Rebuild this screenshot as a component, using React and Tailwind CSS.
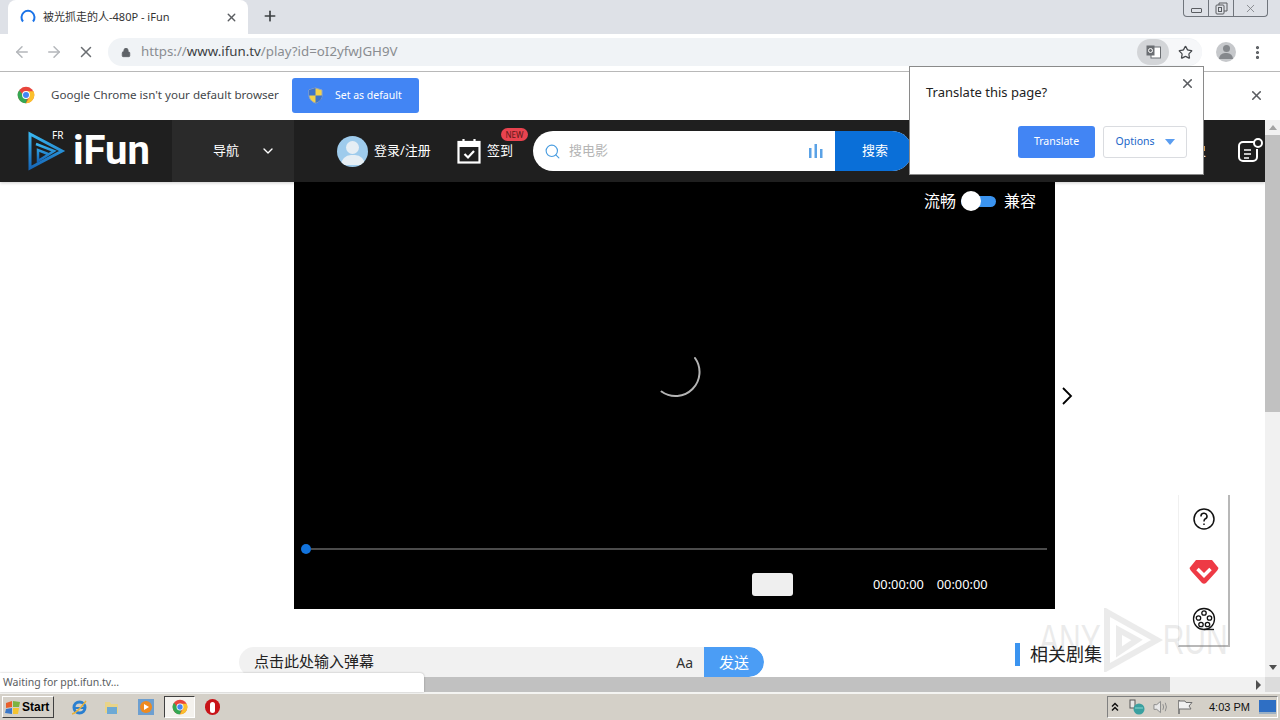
import { ArrowLeft, ArrowRight, X, Lock, Star, Plus, ChevronDown, Search, MoreVertical } from 'lucide-react';

function ChromeLogo({ size = 18 }) {
  return (
    <svg width={size} height={size} viewBox="0 0 24 24">
      <circle cx="12" cy="12" r="11" fill="#e8453c" />
      <path d="M12 12 L2.5 17.5 A11 11 0 0 1 3 5.5 L8 12z" fill="#34a853" />
      <path d="M12 23 A11 11 0 0 1 2.5 17.5 L8 11 L14 16z" fill="#34a853" />
      <path d="M12 7 H22 A11 11 0 0 1 12 23 L17 14z" fill="#fbc02d" />
      <circle cx="12" cy="12" r="5.2" fill="#fff" />
      <circle cx="12" cy="12" r="4" fill="#4285f4" />
    </svg>
  );
}

function ShieldIcon() {
  return (
    <svg width="15" height="17" viewBox="0 0 15 17">
      <path d="M7.5 1 L14 3 V8 C14 12 11 15 7.5 16 C4 15 1 12 1 8 V3z" fill="#f4d24a" stroke="#9aa8b8" />
      <path d="M7.5 1 V8.5 H1 V3z" fill="#3f74c9" />
      <path d="M7.5 8.5 H14 C14 12 11 15 7.5 16z" fill="#3f74c9" />
    </svg>
  );
}

function IfunLogo() {
  return (
    <svg width="38" height="42" viewBox="0 0 38 42" fill="none">
      <defs>
        <linearGradient id="lg" x1="0" y1="0" x2="0" y2="1">
          <stop offset="0" stopColor="#38b6f0" />
          <stop offset="1" stopColor="#1667b8" />
        </linearGradient>
      </defs>
      <path d="M2 4 L34 21 L2 38z" stroke="url(#lg)" strokeWidth="3" />
      <path d="M8 14 L26 21 L10 31 L10 20 L20 24" stroke="url(#lg)" strokeWidth="2.5" />
    </svg>
  );
}

function CalendarIcon() {
  return (
    <svg width="24" height="26" viewBox="0 0 24 26" fill="none">
      <rect x="1.5" y="4" width="21" height="20.5" fill="#1f1f1f" stroke="#fff" strokeWidth="2.2" />
      <rect x="1.5" y="4" width="21" height="5" fill="#fff" />
      <path d="M6.5 1 V6 M17.5 1 V6" stroke="#fff" strokeWidth="2.2" />
      <path d="M7.5 16 L11 19.5 L17 13" stroke="#fff" strokeWidth="2.2" />
    </svg>
  );
}

function Toolbar() {
  return (
    <div className="h-[38px] bg-white flex items-center border-b border-[#b8b8b8] pb-[1px] relative shrink-0">
      <ArrowLeft className="w-[18px] h-[18px] text-[#b4b7bb] ml-[13px]" strokeWidth={2} />
      <ArrowRight className="w-[18px] h-[18px] text-[#b4b7bb] ml-[14px]" strokeWidth={2} />
      <X className="w-[18px] h-[18px] text-[#6b6e72] ml-[14px]" strokeWidth={2} />
      <div className="ml-[13px] w-[1094px] h-[28px] rounded-full bg-[#f0f3f6] flex items-center">
        <Lock className="w-[10px] h-[11px] ml-[13px] text-[#5f6368] fill-[#5f6368]" strokeWidth={2} />
        <span className="ml-[10px] text-[13.3px] text-[#8a8d91]">
          https://<span className="text-[#3c3f43]">www.ifun.tv</span>/play?id=oI2yfwJGH9V
        </span>
        <div className="ml-auto w-[65px] h-[26px] flex items-center rounded-full bg-[#f6f7f9]">
          <div className="w-[32px] h-[26px] rounded-full bg-[#d3d5d8] flex items-center justify-center">
            <svg width="15" height="15" viewBox="0 0 15 15">
              <rect x="5" y="2" width="9.5" height="11" fill="#fff" stroke="#6b6e72" />
              <rect x="0.5" y="0.5" width="8" height="10" fill="#6b6e72" />
              <circle cx="4.5" cy="5.5" r="2" fill="none" stroke="#fff" />
            </svg>
          </div>
          <Star className="w-[15px] h-[15px] ml-[9px] text-[#45484c]" strokeWidth={2} />
        </div>
      </div>
      <div className="ml-[14px] w-[20px] h-[20px] rounded-full bg-[#c6c8cb] flex flex-col items-center justify-center overflow-hidden">
        <div className="w-[7px] h-[7px] rounded-full bg-[#85888c]" />
        <div className="w-[14px] h-[6px] rounded-t-full bg-[#85888c] mt-[1px]" />
      </div>
      <MoreVertical className="w-[17px] h-[17px] ml-[13px] text-[#55585c]" strokeWidth={2.5} />
    </div>
  );
}

function Header() {
  return (
    <div className="h-[62px] bg-[#1f1f1f] flex items-center shadow-[0_1px_3px_rgba(0,0,0,0.2)] shrink-0">
      <div className="w-[172px] h-full flex items-center relative">
        <div className="ml-[28px]"><IfunLogo /></div>
        <span className="absolute left-[52px] top-[9px] text-[10px] leading-[12px] text-white">FR</span>
        <span className="ml-[7px] text-[40px] leading-none font-bold text-white font-['Roboto',sans-serif]">iFun</span>
      </div>
      <div className="w-[122px] h-full bg-[#2a2a2a] flex items-center text-white text-[13px]">
        <span className="ml-[41px]">导航</span>
        <ChevronDown className="w-[16px] h-[16px] ml-[21px]" strokeWidth={2} />
      </div>
      <div className="ml-[43px] w-[31px] h-[31px] rounded-full bg-[#9ecbec] flex flex-col items-center justify-center overflow-hidden">
        <div className="w-[13px] h-[13px] rounded-full bg-[#e6eef4] mt-[3px]" />
        <div className="w-[24px] h-[10px] rounded-t-full bg-[#e6eef4] mt-[1px]" />
      </div>
      <span className="ml-[6px] text-white text-[13px] w-[60px] whitespace-nowrap">登录/注册</span>
      <div className="ml-[23px]"><CalendarIcon /></div>
      <div className="relative ml-[6px] mt-[-4px] w-[45px]">
        <span className="text-white text-[13px]">签到</span>
        <span className="absolute left-[14px] top-[-9px] w-[27px] h-[13px] rounded-full bg-[#e8434f] text-[#5b1a18] text-[8px] leading-[13px] text-center">NEW</span>
      </div>
      <div className="ml-[1px] w-[379px] h-[40px] rounded-full bg-white overflow-hidden flex items-center">
        <Search className="w-[17px] h-[17px] ml-[11px] text-[#4a9de0]" strokeWidth={1.6} />
        <span className="ml-[8px] text-[13px] text-[#b5b5b5]">搜电影</span>
        <svg className="ml-auto mr-[11px]" width="16" height="14" viewBox="0 0 16 14" fill="#5aa2e6">
          <rect x="1" y="4" width="2.5" height="10" />
          <rect x="6.5" y="0" width="2.5" height="14" />
          <rect x="12" y="5" width="2.5" height="9" />
        </svg>
        <div className="w-[77px] h-full pl-[3px] bg-[#0a6fd8] text-white text-[13px] flex items-center justify-center">搜索</div>
      </div>
      <span className="ml-auto text-white text-[13px]">历史</span>
      <svg className="ml-[30px] mr-[1px]" width="28" height="28" viewBox="0 0 28 28" fill="none" stroke="#fff" strokeWidth="2">
        <path d="M19 5 H7 A4 4 0 0 0 3 9 V20 A4 4 0 0 0 7 24 H17 A4 4 0 0 0 21 20 V12" />
        <path d="M8 13 H15 M8 17 H15 M8 21 H13" strokeWidth="1.6" />
        <circle cx="22" cy="6" r="4" />
      </svg>
    </div>
  );
}

function Player() {
  return (
    <div className="w-[761px] h-[427px] bg-black flex flex-col relative">
      <div className="flex items-center justify-end h-[40px] pb-[2px] text-white text-[16px] pr-[19px]">
        <span>流畅</span>
        <div className="relative w-[35px] h-[11px] ml-[5px] mr-[8px] rounded-full bg-[#3b94f0]">
          <div className="absolute left-0 top-[-5px] w-[20px] h-[20px] rounded-full bg-white" />
        </div>
        <span>兼容</span>
      </div>
      <div className="flex-1 flex items-center justify-center pb-[20px]">
        <svg width="52" height="52" viewBox="0 0 52 52" fill="none">
          <path d="M46 12 A24 24 0 0 1 12.5 45.5" stroke="#b4b4b4" strokeWidth="2" strokeLinecap="round" />
        </svg>
      </div>
      <div className="flex items-center h-[16px] pl-[7px] pr-[8px]">
        <div className="w-[10px] h-[10px] rounded-full bg-[#1273dd] shrink-0" />
        <div className="flex-1 h-[2px] bg-[#4b4b4b]" />
      </div>
      <div className="h-[52px] flex items-start pt-[16px]">
        <div className="ml-[458px] w-[41px] h-[23px] rounded-[3px] bg-[#efefef]" />
        <span className="ml-[80px] text-white text-[12.8px] leading-[23px]">00:00:00</span>
        <span className="ml-[13px] text-white text-[12.8px] leading-[23px]">00:00:00</span>
      </div>
    </div>
  );
}

function Page() {
  return (
    <div className="flex-1 min-w-0 bg-white flex flex-col overflow-hidden relative">
      <Header />
      <div className="flex">
        <div className="ml-[294px]"><Player /></div>
        <svg className="self-center ml-[6px]" width="12" height="20" viewBox="0 0 12 20" fill="none" stroke="#000" strokeWidth="1.8">
          <path d="M2 2 L10 10 L2 18" />
        </svg>
      </div>
      <div className="flex mt-[38px] items-start">
        <div className="ml-[239px] w-[525px] h-[30px] rounded-full bg-[#f1f1f1] flex items-center overflow-hidden">
          <span className="ml-[15px] mt-[-2px] text-[15px] text-[#222]">点击此处输入弹幕</span>
          <span className="ml-auto mr-[11px] text-[14px] text-[#333]">Aa</span>
          <div className="w-[60px] h-full bg-[#4b9df5] text-white text-[15px] flex items-center justify-center rounded-r-full">发送</div>
        </div>
        <div className="ml-[251px] mt-[-5px] flex items-center">
          <div className="w-[5px] h-[23px] bg-[#3b94f0]" />
          <span className="ml-[10px] text-[18px] leading-[24px] text-[#222]">相关剧集</span>
        </div>
      </div>

      {/* floating side tools */}
      <div className="absolute left-[1178px] top-[375px] w-[52px] h-[152px] bg-white border-l border-[#f0f0f0] border-r-2 border-r-[#b8b8b8] border-b-2 border-b-[#b8b8b8] flex flex-col items-center">
        <svg className="mt-[13px]" width="22" height="22" viewBox="0 0 22 22" fill="none" stroke="#111" strokeWidth="1.5">
          <circle cx="11" cy="11" r="10" />
          <path d="M8 8.5 A3 3 0 1 1 12 11 Q11 11.6 11 13.5" />
          <path d="M11 15.5 V17" />
        </svg>
        <svg className="mt-[29px]" width="30" height="26" viewBox="0 0 30 26">
          <path d="M7 1 H23 L29.5 9 Q29 11 27 13 L17 24 Q15 25.5 13 24 L3 13 Q1 11 0.5 9z" fill="#ee3a45" />
          <path d="M8.5 10 L15 16.5 L21.5 10" fill="none" stroke="#fff" strokeWidth="3.5" />
        </svg>
        <svg className="mt-[22px]" width="24" height="24" viewBox="0 0 24 24" fill="none" stroke="#111" strokeWidth="1.3">
          <circle cx="12" cy="12" r="10.5" />
          <circle cx="12" cy="6" r="2.2" />
          <circle cx="6.5" cy="11" r="2.2" />
          <circle cx="17.5" cy="11" r="2.2" />
          <circle cx="9" cy="17.5" r="2.2" />
          <circle cx="15.5" cy="17.5" r="2.2" />
          <path d="M12 22.5 H22" />
        </svg>
      </div>

      {/* watermark */}
      <div className="absolute left-[1039px] top-[488px] flex items-center opacity-[0.14] pointer-events-none text-[#777] text-[30px] leading-none font-['Liberation_Sans',sans-serif]">
        <span className="scale-y-[1.4]">ANY</span>
        <svg width="62" height="64" viewBox="0 0 62 64" fill="none" stroke="#777" strokeWidth="6">
          <path d="M6 4 L56 32 L6 60z" />
          <path d="M18 22 L36 32 L18 44z" />
        </svg>
        <span className="scale-y-[1.4]">RUN</span>
      </div>
    </div>
  );
}

function VScrollbar() {
  return (
    <div className="w-[15px] bg-[#f1f1f1] flex flex-col items-center shrink-0">
      <div className="h-[15px] w-full flex items-center justify-center">
        <div className="w-0 h-0 border-x-[4px] border-x-transparent border-b-[5px] border-b-[#a3a3a3]" />
      </div>
      <div className="w-full h-[277px] bg-[#c1c1c1]" />
      <div className="mt-auto h-[20px] w-full flex items-center justify-center">
        <div className="w-0 h-0 border-x-[4px] border-x-transparent border-t-[5px] border-t-[#505050]" />
      </div>
    </div>
  );
}

function Taskbar() {
  return (
    <div className="h-[28px] bg-[#d4d0c8] border-t-2 border-[#f4f4f2] flex items-center shrink-0 font-['Liberation_Sans',sans-serif]">
      <div className="ml-[2px] w-[52px] h-[22px] bg-[#d4d0c8] border border-t-white border-l-white border-r-[#404040] border-b-[#404040] flex items-center">
        <svg className="ml-[2px]" width="16" height="15" viewBox="0 0 16 15">
          <path d="M1 3 L7 1 L7 7 L1 8z" fill="#e8602c" />
          <path d="M8 1 L15 2 L14 7 L8 7z" fill="#7cb342" />
          <path d="M1 9 L7 8 L7 14 L0 13z" fill="#3b78c9" />
          <path d="M8 8 L14 8 L13 14 L8 14z" fill="#f4c430" />
        </svg>
        <span className="ml-[1px] text-[12px] font-bold text-black">Start</span>
      </div>
      <svg className="ml-[17px]" width="17" height="17" viewBox="0 0 17 17" fill="none">
        <circle cx="8.5" cy="8.5" r="5.5" stroke="#2a7fd0" strokeWidth="3" />
        <path d="M3 9 H14" stroke="#2a7fd0" strokeWidth="2" />
        <path d="M1 15 Q6 14 15 2" stroke="#e8b23a" strokeWidth="1.5" />
      </svg>
      <svg className="ml-[16px]" width="16" height="16" viewBox="0 0 16 16">
        <path d="M1 3 H6 L7 5 H14 V14 H1z" fill="#e9d48a" />
        <path d="M3 8 H13 V15 H3z" fill="#6ea9d4" />
      </svg>
      <div className="ml-[18px] w-[16px] h-[16px] bg-[#6d9fd0] flex items-center justify-center">
        <div className="w-[12px] h-[12px] rounded-full bg-[#ee8a1f] flex items-center justify-center">
          <div className="w-0 h-0 border-y-[3px] border-y-transparent border-l-[5px] border-l-white ml-[1px]" />
        </div>
      </div>
      <div className="ml-[10px] w-[31px] h-[22px] bg-[#f4f2ee] border border-t-[#404040] border-l-[#404040] border-r-white border-b-white flex items-center justify-center">
        <ChromeLogo size={16} />
      </div>
      <div className="ml-[10px] w-[15px] h-[16px] rounded-full bg-[#c81318] flex items-center justify-center">
        <div className="w-[5px] h-[11px] rounded-full bg-white" />
      </div>
      <div className="ml-auto mr-[2px] w-[171px] h-[22px] border border-t-[#808080] border-l-[#808080] border-r-white border-b-white flex items-center">
        <svg className="ml-[3px]" width="8" height="10" viewBox="0 0 8 10" fill="none" stroke="#111" strokeWidth="1.5">
          <path d="M1 4.5 L4 1.5 L7 4.5 M1 8.5 L4 5.5 L7 8.5" />
        </svg>
        <svg className="ml-[10px]" width="16" height="16" viewBox="0 0 16 16">
          <rect x="1" y="1" width="5" height="8" fill="#e6e6e6" stroke="#555" />
          <circle cx="10" cy="10" r="5.5" fill="#3aa0a0" />
          <path d="M6 9 H14" stroke="#8ad8d0" />
        </svg>
        <svg className="ml-[8px]" width="16" height="16" viewBox="0 0 17 16" fill="none" stroke="#8a8a8a">
          <path d="M1 5.5 H4 L8 2 V14 L4 10.5 H1z" fill="#e8e8e8" />
          <path d="M10.5 5 Q12 8 10.5 11 M13 3.5 Q15.5 8 13 12.5" />
        </svg>
        <svg className="ml-[8px]" width="16" height="16" viewBox="0 0 16 16" fill="none" stroke="#6e6e6e">
          <path d="M2 1 V15" strokeWidth="1.5" />
          <path d="M2 2 H8 L9 3.5 H15 L12 7 L14 10 H2" fill="#f0f0f0" />
        </svg>
        <span className="ml-[16px] text-[11px] text-[#111]">4:03 PM</span>
        <div className="ml-auto mr-[1px] w-[17px] h-[14px] bg-[#2f6fc4] border-b-2 border-[#9bb0c4]" />
      </div>
    </div>
  );
}

export default function App() {
  return (
    <div className="w-[1280px] h-[720px] overflow-hidden flex flex-col relative bg-white font-['Noto_Sans','Noto_Sans_CJK_SC',sans-serif]">
      {/* tab strip */}
      <div className="h-[34px] bg-[#dee1e7] flex items-end relative shrink-0">
        <div className="ml-[8px] w-[240px] h-[34px] bg-white rounded-t-lg flex items-center">
          <svg className="ml-[12px]" width="16" height="16" viewBox="0 0 16 16" fill="none">
            <path d="M3 12.5 A6.5 6.5 0 1 1 13 12.5" stroke="#1a73e8" strokeWidth="2" />
          </svg>
          <span className="ml-[7px] text-[11px] text-[#333] whitespace-nowrap">被光抓走的人-480P - iFun</span>
          <X className="w-[13px] h-[13px] ml-auto mr-[10px] text-[#5a5d61]" strokeWidth={2.5} />
        </div>
        <Plus className="w-[16px] h-[16px] ml-[14px] mb-[10px] text-[#3c4043]" strokeWidth={2.5} />
        <div className="absolute right-[12px] top-0 w-[85px] h-[17px] border border-t-0 border-[#70757c] rounded-b-[4px] flex text-[#5a5d61]">
          <div className="w-[25px] flex items-center justify-center border-r border-[#70757c]">
            <div className="w-[11px] h-[5px] border border-[#5a5d61] rounded-[1px] mt-[4px]" />
          </div>
          <div className="w-[25px] flex items-center justify-center border-r border-[#70757c]">
            <svg width="13" height="13" viewBox="0 0 13 13" fill="none" stroke="#5a5d61">
              <rect x="1" y="3" width="8" height="9" rx="1" />
              <path d="M4 3 V1 H12 V9 H9" />
              <rect x="3.5" y="5.5" width="3" height="4" />
            </svg>
          </div>
          <div className="flex-1 flex items-center justify-center">
            <X className="w-[13px] h-[13px] text-[#7a7d81]" strokeWidth={1.5} />
          </div>
        </div>
      </div>

      <Toolbar />

      {/* default browser bar */}
      <div className="h-[48px] bg-white flex items-center pb-[2px] relative shrink-0">
        <div className="ml-[17px]"><ChromeLogo /></div>
        <span className="ml-[16px] text-[11.6px] text-[#44474b] whitespace-nowrap">Google Chrome isn't your default browser</span>
        <div className="absolute left-[292px] top-[6px] w-[127px] h-[35px] rounded-[3px] bg-[#4285f4] flex items-center text-white text-[10.5px]">
          <div className="ml-[16px]"><ShieldIcon /></div>
          <span className="ml-[12px]">Set as default</span>
        </div>
        <X className="absolute right-[16px] top-[16px] w-[15px] h-[15px] text-[#5a5d61]" strokeWidth={2.5} />
      </div>

      {/* browser content */}
      <div className="flex flex-1 min-h-0">
        <Page />
        <VScrollbar />
      </div>

      {/* horizontal scrollbar */}
      <div className="h-[15px] bg-[#f1f1f1] flex items-center shrink-0">
        <div className="ml-[424px] w-[746px] h-full bg-[#c1c1c1]" />
        <div className="ml-auto mr-[4px] w-0 h-0 border-y-[5px] border-y-transparent border-l-[5px] border-l-[#505050]" />
        <div className="w-[15px] h-full bg-[#dcdcdc]" />
      </div>

      <Taskbar />

      {/* status bubble */}
      <div className="absolute left-0 top-[673px] w-[424px] h-[19px] bg-white rounded-tr-[4px] shadow-[0_0_2px_rgba(0,0,0,0.3)] flex items-center">
        <span className="ml-[3px] text-[10.5px] text-[#5a5d61]">Waiting for ppt.ifun.tv...</span>
      </div>

      {/* translate bubble */}
      <div className="absolute left-[909px] top-[66px] w-[295px] h-[109px] bg-white border border-[#8a8a8a] flex flex-col">
        <div className="flex items-start h-[59px]">
          <span className="ml-[16px] mt-[16px] text-[13px] text-[#222]">Translate this page?</span>
          <X className="ml-auto mr-[8px] mt-[9px] w-[15px] h-[15px] text-[#5a5d61]" strokeWidth={2.5} />
        </div>
        <div className="flex items-center justify-end pr-[16px]">
          <div className="w-[77px] h-[32px] rounded-[3px] bg-[#4285f4] text-white text-[10.5px] flex items-center justify-center">Translate</div>
          <div className="ml-[8px] w-[84px] h-[32px] rounded-[3px] border border-[#dadce0] text-[#1a66c9] text-[10.5px] flex items-center justify-center">
            Options
            <div className="ml-[10px] w-0 h-0 border-x-[5px] border-x-transparent border-t-[6px] border-t-[#5a9df0]" />
          </div>
        </div>
      </div>
    </div>
  );
}
